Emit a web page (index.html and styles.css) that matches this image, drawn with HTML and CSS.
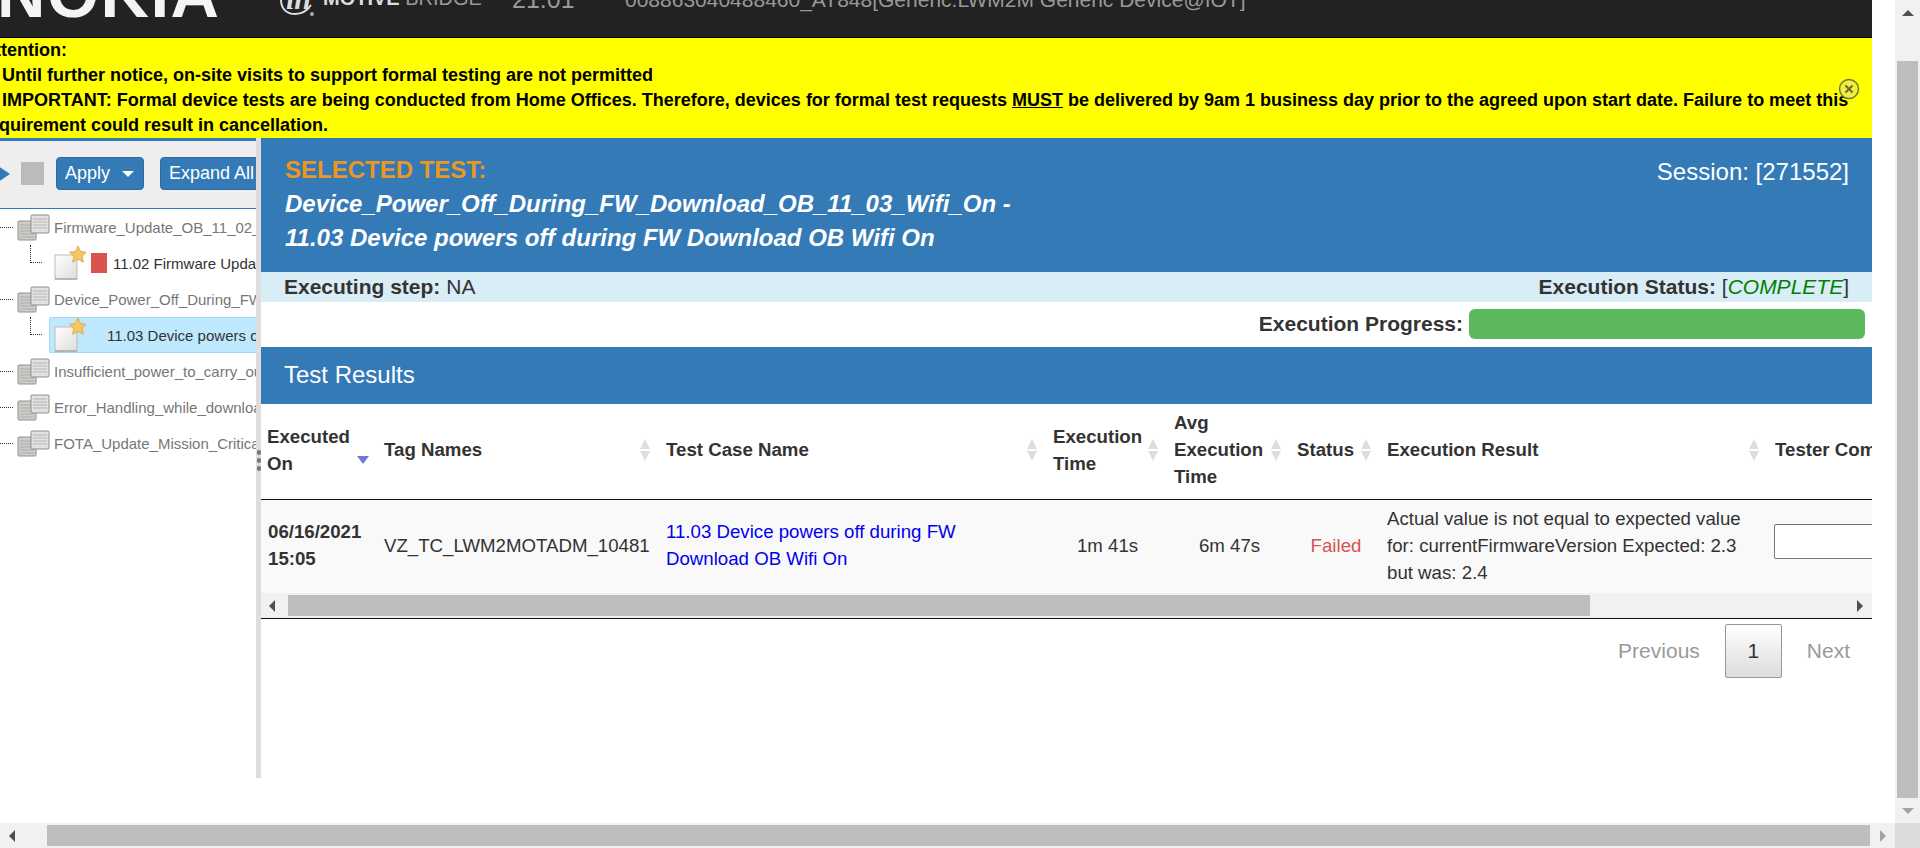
FILE: index.html
```html
<!DOCTYPE html>
<html lang="en">
<head>
    <meta charset="UTF-8">
    <title>Motive Bridge</title>
    <link rel="stylesheet" href="styles.css">
</head>
<body>
    <svg class="defs" width="0" height="0">
        <defs>
            <linearGradient id="page-fill" x1="0" y1="0" x2="1" y2="1">
                <stop offset="0" stop-color="#fff"/>
                <stop offset="1" stop-color="#dedddb"/>
            </linearGradient>
        </defs>
        <symbol id="icon-suite" viewBox="0 0 33 27">
            <rect x="1" y="7" width="18" height="19" rx="1" fill="#cfcdca" stroke="#8f8f8f"/>
            <path d="M3 11h14M3 14h14M3 17h14M3 20h14M3 23h14" stroke="#aeaca9"/>
            <rect x="14" y="1" width="18" height="18" rx="1" fill="#e2e1df" stroke="#8f8f8f"/>
            <path d="M16 5h14M16 8h14M16 11h14M16 14h14" stroke="#b5b5b5"/>
        </symbol>
        <symbol id="icon-test" viewBox="0 0 32 34">
            <rect x="1" y="9" width="22" height="24" fill="url(#page-fill)" stroke="#bbb"/>
            <path d="M1 33h22" stroke="#999"/>
            <path d="M24 0l2.500 5.500 6 .7-4.400 4 1.200 6-5.300-3-5.300 3 1.200-6-4.400-4 6-.7z" fill="#f3c766" stroke="#e3ad4a"/>
        </symbol>
        <symbol id="sort" viewBox="0 0 12 24">
            <path d="M6 1l5 10H1zM6 23L1 13h10z" fill="#ddd"/>
        </symbol>
    </svg>

    <div class="window">
        <div class="window-main">
            <div class="page">
                <div class="topbar">
                    <span class="logo">NOKIA</span>
                    <span class="mark">
                        <span class="mark-text">in</span>
                        <svg class="swoosh" width="36" height="20" viewBox="0 0 36 20">
                            <path d="M1 0c0 9 6 14 14 14 7 0 12-3 16-9" fill="none" stroke="#ddd" stroke-width="2"/>
                            <circle cx="32" cy="14" r="2" fill="#aaa"/>
                        </svg>
                    </span>
                    <span class="brand"><b>MOTIVE</b> BRIDGE</span>
                    <span class="version">21.01</span>
                    <span class="device">008863040488460_AT848[Generic.LWM2M Generic Device@IOT]</span>
                </div>

                <div class="notice">
                    <p>Attention:<br>
                    1. Until further notice, on-site visits to support formal testing are not permitted<br>
                    2. IMPORTANT: Formal device tests are being conducted from Home Offices. Therefore, devices for formal test requests <u>MUST</u> be delivered by 9am 1 business day prior to the agreed upon start date. Failure to meet this<br>
                    requirement could result in cancellation.</p>
                    <svg class="notice-close" width="22" height="22" viewBox="0 0 22 22">
                        <circle cx="11" cy="11" r="9.500" fill="#f0f03a" stroke="#77773a" stroke-width="1.500"/>
                        <path d="M7.500 7.500l7 7M14.500 7.500l-7 7" stroke="#66663a" stroke-width="2"/>
                    </svg>
                </div>

                <div class="workspace">
                    <div class="sidebar">
                        <div class="toolbar">
                            <span class="play"></span>
                            <span class="stop"></span>
                            <button class="tool-btn apply">Apply <i class="caret"></i></button>
                            <button class="tool-btn expand">Expand All</button>
                        </div>
                        <div class="tree">
                            <div class="node"><i class="dash"></i><svg class="ic-suite"><use href="#icon-suite"/></svg><span class="root-name">Firmware_Update_OB_11_02_Wifi_On</span></div>
                            <div class="node"><i class="elbow"></i><svg class="ic-test"><use href="#icon-test"/></svg><i class="fail-mark"></i><span class="leaf-name">11.02 Firmware Update OB Wifi On</span></div>
                            <div class="node"><i class="dash"></i><svg class="ic-suite"><use href="#icon-suite"/></svg><span class="root-name">Device_Power_Off_During_FW_Download</span></div>
                            <div class="node"><i class="elbow"></i><div class="selected"><svg class="ic-test"><use href="#icon-test"/></svg><span class="leaf-name">11.03 Device powers off during FW</span></div></div>
                            <div class="node"><i class="dash"></i><svg class="ic-suite"><use href="#icon-suite"/></svg><span class="root-name">Insufficient_power_to_carry_out_update</span></div>
                            <div class="node"><i class="dash"></i><svg class="ic-suite"><use href="#icon-suite"/></svg><span class="root-name">Error_Handling_while_downloading</span></div>
                            <div class="node"><i class="dash"></i><svg class="ic-suite"><use href="#icon-suite"/></svg><span class="root-name">FOTA_Update_Mission_Critical_Device</span></div>
                        </div>
                    </div>

                    <div class="splitter"><i></i><i></i><i></i></div>

                    <div class="content">
                        <div class="selected-head">
                            <div>
                                <div class="selected-label">SELECTED TEST:</div>
                                <div class="selected-title">Device_Power_Off_During_FW_Download_OB_11_03_Wifi_On -<br>11.03 Device powers off during FW Download OB Wifi On</div>
                            </div>
                            <div class="session">Session: [271552]</div>
                        </div>
                        <div class="status-row">
                            <span><b>Executing step:</b> NA</span>
                            <span><b>Execution Status:</b> [<em>COMPLETE</em>]</span>
                        </div>
                        <div class="progress-row">
                            <b>Execution Progress:</b>
                            <div class="progress-bar"></div>
                        </div>
                        <div class="results-title">Test Results</div>

                        <div class="table-wrap">
                            <table class="results">
                                <colgroup>
                                    <col class="c-date"><col class="c-tag"><col class="c-name"><col class="c-time"><col class="c-avg"><col class="c-status"><col class="c-result"><col class="c-comment">
                                </colgroup>
                                <thead>
                                    <tr>
                                        <th><div class="th-in"><span>Executed On</span><svg class="sort-desc" width="12" height="8" viewBox="0 0 12 8"><path d="M0 0h12L6 8z" fill="#7277d8"/></svg></div></th>
                                        <th><div class="th-in"><span>Tag Names</span><svg class="sort"><use href="#sort"/></svg></div></th>
                                        <th><div class="th-in"><span>Test Case Name</span><svg class="sort"><use href="#sort"/></svg></div></th>
                                        <th><div class="th-in"><span>Execution Time</span><svg class="sort"><use href="#sort"/></svg></div></th>
                                        <th><div class="th-in"><span>Avg Execution Time</span><svg class="sort"><use href="#sort"/></svg></div></th>
                                        <th><div class="th-in"><span>Status</span><svg class="sort"><use href="#sort"/></svg></div></th>
                                        <th><div class="th-in"><span>Execution Result</span><svg class="sort"><use href="#sort"/></svg></div></th>
                                        <th class="nowrap">Tester Comments</th>
                                    </tr>
                                </thead>
                                <tbody>
                                    <tr>
                                        <td class="cell-date">06/16/2021 15:05</td>
                                        <td>VZ_TC_LWM2MOTADM_10481</td>
                                        <td><a href="#">11.03 Device powers off during FW Download OB Wifi On</a></td>
                                        <td class="center">1m 41s</td>
                                        <td class="center">6m 47s</td>
                                        <td class="center failed">Failed</td>
                                        <td>Actual value is not equal to expected value for: currentFirmwareVersion Expected: 2.3 but was: 2.4</td>
                                        <td class="cell-comment"><input class="comment" type="text"></td>
                                    </tr>
                                </tbody>
                            </table>
                        </div>
                        <div class="table-scroll">
                            <span class="arrow-left dark"></span>
                            <div class="table-thumb"></div>
                            <span class="arrow-right dark"></span>
                        </div>

                        <div class="pager">
                            <span class="pager-off">Previous</span>
                            <span class="pager-cur">1</span>
                            <span class="pager-off">Next</span>
                        </div>
                    </div>
                </div>
            </div>
            <div class="page-gutter"></div>
            <div class="vscroll">
                <div class="vscroll-top"><span class="arrow-up"></span></div>
                <div class="vscroll-thumb"></div>
                <div class="vscroll-bottom"><span class="arrow-down"></span></div>
            </div>
        </div>
        <div class="hscroll">
            <div class="hscroll-start"><span class="arrow-left dark"></span></div>
            <div class="hscroll-thumb"></div>
            <div class="hscroll-end"><span class="arrow-right"></span></div>
            <div class="corner"></div>
        </div>
    </div>
</body>
</html>
```

FILE: styles.css
```css
html, body {
    margin: 0;
    height: 100%;
    overflow: hidden;
    background: #fff;
    font-family: "Liberation Sans", Arial, sans-serif;
    color: #333;
}
.defs {
    display: block;
    height: 0;
}
.window {
    display: flex;
    flex-direction: column;
    height: 848px;
    width: 1920px;
}
.window-main {
    display: flex;
    height: 823px;
}
.page {
    width: 1872px;
    overflow: hidden;
    flex: none;
}
.page-gutter {
    flex: 1;
}

/* top bar, the page is scrolled so only the bottom shows */
.topbar {
    height: 37px;
    background: #222;
    border-bottom: 1px solid #000;
    display: flex;
    align-items: flex-start;
    overflow: hidden;
    color: #999;
}
.logo {
    flex: none;
    width: 280px;
    margin: -40px 0 0 -3px;
    font-size: 67px;
    line-height: 67px;
    font-weight: bold;
    letter-spacing: 1.5px;
    color: #f4f4f4;
}
.mark {
    flex: none;
    width: 38px;
    margin-left: 3px;
    display: flex;
    flex-direction: column;
}
.mark-text {
    height: 0;
    margin: -9px 0 9px 6px;
    font: italic bold 30px/16px "Liberation Serif", serif;
    color: #ddd;
}
.brand {
    flex: none;
    width: 189px;
    margin: -15px 0 0 5px;
    font-size: 20px;
    line-height: 26px;
    white-space: nowrap;
    color: #999;
}
.brand b {
    color: #ddd;
}
.version {
    flex: none;
    width: 113px;
    margin-top: -15px;
    font-size: 25px;
    line-height: 28px;
}
.device {
    flex: none;
    margin-top: -14px;
    font-size: 21px;
    line-height: 28px;
    white-space: nowrap;
}

.notice {
    height: 100px;
    background: #ff0;
    position: relative;
    color: #000;
    font-size: 18px;
    font-weight: bold;
    line-height: 25px;
}
.notice p {
    margin: 0 0 0 -18px;
    white-space: nowrap;
}
.notice-close {
    position: absolute;
    left: 1838px;
    top: 40px;
}

.workspace {
    display: flex;
    height: 640px;
}
.sidebar {
    width: 256px;
    flex: none;
    overflow: hidden;
    border-top: 3px solid #337ab7;
    box-sizing: border-box;
}
.toolbar {
    height: 68px;
    box-sizing: border-box;
    background: #eee;
    border-bottom: 1px solid #337ab7;
    display: flex;
    align-items: center;
    padding-bottom: 2px;
    white-space: nowrap;
}
.play {
    flex: none;
    margin-left: -2px;
    border-left: 12px solid #337ab7;
    border-top: 8px solid transparent;
    border-bottom: 8px solid transparent;
}
.stop {
    flex: none;
    width: 23px;
    height: 23px;
    margin-left: 11px;
    background: #bbb;
}
.tool-btn {
    flex: none;
    height: 33px;
    border: 1px solid #2e6da4;
    border-radius: 4px;
    background: #337ab7;
    color: #fff;
    font: 18px "Liberation Sans", Arial, sans-serif;
    padding: 0 8px;
    text-align: left;
}
.apply {
    width: 88px;
    margin-left: 12px;
}
.expand {
    width: 110px;
    margin-left: 16px;
}
.caret {
    display: inline-block;
    margin-left: 7px;
    vertical-align: 2px;
    border-top: 6px solid #fff;
    border-left: 6px solid transparent;
    border-right: 6px solid transparent;
}
.node {
    height: 36px;
    display: flex;
    align-items: center;
    white-space: nowrap;
    font-size: 15px;
}
.dash {
    flex: none;
    width: 13px;
    margin-right: 4px;
    border-bottom: 1px dotted #333;
}
.ic-suite {
    flex: none;
    width: 33px;
    height: 27px;
    margin-right: 4px;
}
.elbow {
    flex: none;
    align-self: flex-start;
    width: 11px;
    height: 17px;
    margin: 0 0 0 30px;
    border-left: 1px dotted #333;
    border-bottom: 1px dotted #333;
}
.ic-test {
    flex: none;
    width: 32px;
    height: 34px;
    margin-left: 12px;
}
.root-name {
    color: #777;
}
.leaf-name {
    color: #333;
}
.fail-mark {
    flex: none;
    width: 16px;
    height: 20px;
    margin: 0 6px 0 5px;
    background: #d9534f;
}
.selected {
    flex: 1;
    height: 36px;
    margin-left: 7px;
    box-sizing: border-box;
    display: flex;
    align-items: center;
    background: #bde8fd;
    border: 1px solid #a8daf2;
    border-right: 0;
    border-radius: 2px 0 0 2px;
}
.selected .ic-test {
    margin-left: 4px;
}
.selected .leaf-name {
    margin-left: 21px;
}

.splitter {
    width: 5px;
    flex: none;
    background: #ddd;
    display: flex;
    flex-direction: column;
    align-items: center;
    gap: 3px;
    padding-top: 312px;
    box-sizing: border-box;
}
.splitter i {
    width: 4px;
    height: 5px;
    background: #777;
    border-radius: 2px;
}

.content {
    flex: 1;
    min-width: 0;
}
.selected-head {
    height: 134px;
    box-sizing: border-box;
    background: #337ab7;
    color: #fff;
    display: flex;
    justify-content: space-between;
    padding: 15px 23px 0 24px;
    font-size: 24px;
}
.selected-label {
    color: #ec971f;
    font-weight: bold;
    line-height: 34px;
}
.selected-title {
    font-weight: bold;
    font-style: italic;
    line-height: 34px;
}
.session {
    line-height: 38px;
}
.status-row {
    height: 30px;
    background: #d9edf7;
    display: flex;
    justify-content: space-between;
    align-items: center;
    padding: 0 23px 0 23px;
    font-size: 21px;
}
.status-row em {
    color: green;
}
.progress-row {
    height: 45px;
    display: flex;
    justify-content: flex-end;
    align-items: flex-start;
    padding-right: 7px;
    font-size: 21px;
    line-height: 30px;
    box-sizing: border-box;
    padding-top: 7px;
}
.progress-bar {
    width: 396px;
    height: 30px;
    margin-left: 6px;
    background: #5cb85c;
    border-radius: 6px;
}
.results-title {
    height: 57px;
    background: #337ab7;
    color: #fff;
    font-size: 24px;
    line-height: 55px;
    padding-left: 23px;
}

.table-wrap {
    overflow: hidden;
}
.results {
    table-layout: fixed;
    width: 1720px;
    border-collapse: collapse;
    font-size: 18.67px;
    line-height: 27px;
}
.c-date { width: 117px; }
.c-tag { width: 282px; }
.c-name { width: 387px; }
.c-time { width: 121px; }
.c-avg { width: 123px; }
.c-status { width: 90px; }
.c-result { width: 388px; }
.c-comment { width: 212px; }
.results th {
    height: 95px;
    box-sizing: border-box;
    padding: 0 0 3px 6px;
    text-align: left;
    border-bottom: 1px solid #111;
    color: #333;
    vertical-align: middle;
}
.th-in {
    display: flex;
    align-items: center;
    justify-content: space-between;
    padding-right: 9px;
}
.sort {
    flex: none;
    width: 12px;
    height: 24px;
}
.sort-desc {
    flex: none;
    margin-top: 20px;
}
.nowrap {
    white-space: nowrap;
}
.results td {
    height: 94px;
    box-sizing: border-box;
    padding: 0 6px 2px;
    background: #f9f9f9;
}
.results .cell-date {
    font-weight: bold;
    padding-left: 7px;
}
.results a {
    color: #00e;
    text-decoration: none;
}
.center {
    text-align: center;
}
.results .failed {
    color: #d9534f;
}
.results .cell-comment {
    padding-left: 5px;
}
.comment {
    box-sizing: border-box;
    width: 190px;
    height: 35px;
    margin-bottom: 8px;
    border: 1px solid #767676;
    border-radius: 2px;
    background: #fff;
    display: block;
}

.table-scroll {
    height: 26px;
    box-sizing: border-box;
    background: #f1f1f1;
    border-bottom: 1px solid #111;
    display: flex;
    align-items: center;
    position: relative;
}
.table-thumb {
    width: 1302px;
    height: 21px;
    margin: 0 0 1px 13px;
    background: #bebebe;
}
.table-scroll .arrow-left {
    margin-left: 8px;
}
.table-scroll .arrow-right {
    margin-left: 267px;
}
.arrow-left {
    flex: none;
    border-right: 6px solid #a3a3a3;
    border-top: 6px solid transparent;
    border-bottom: 6px solid transparent;
}
.arrow-right {
    flex: none;
    border-left: 6px solid #a3a3a3;
    border-top: 6px solid transparent;
    border-bottom: 6px solid transparent;
}
.arrow-left.dark {
    border-right-color: #505050;
}
.arrow-right.dark {
    border-left-color: #505050;
}
.arrow-up {
    border-bottom: 6px solid #505050;
    border-left: 6px solid transparent;
    border-right: 6px solid transparent;
}
.arrow-down {
    border-top: 6px solid #a3a3a3;
    border-left: 6px solid transparent;
    border-right: 6px solid transparent;
}

.pager {
    display: flex;
    justify-content: flex-end;
    align-items: center;
    margin-top: 5px;
    padding-right: 22px;
    font-size: 21px;
}
.pager-off {
    color: #999;
}
.pager-cur {
    width: 57px;
    height: 54px;
    margin: 0 25px;
    box-sizing: border-box;
    border: 1px solid #979797;
    border-radius: 2px;
    background: linear-gradient(#fff, #dcdcdc);
    text-align: center;
    line-height: 52px;
}

.vscroll {
    width: 25px;
    flex: none;
    background: #f1f1f1;
    display: flex;
    flex-direction: column;
    align-items: center;
}
.vscroll-top {
    height: 61px;
    display: flex;
    justify-content: center;
    padding-top: 10px;
    box-sizing: border-box;
}
.vscroll-top .arrow-up {
    height: 0;
}
.vscroll-thumb {
    width: 21px;
    height: 737px;
    background: #bebebe;
}
.vscroll-bottom {
    height: 25px;
    display: flex;
    justify-content: center;
    align-items: center;
}
.hscroll {
    height: 25px;
    display: flex;
    background: #f1f1f1;
}
.hscroll-start {
    width: 47px;
    display: flex;
    align-items: center;
    padding-left: 9px;
    box-sizing: border-box;
}
.hscroll-thumb {
    width: 1823px;
    height: 21px;
    margin-top: 2px;
    background: #bebebe;
}
.hscroll-end {
    width: 25px;
    display: flex;
    align-items: center;
    justify-content: center;
}
.corner {
    width: 25px;
    background: #dcdcdc;
}
```
